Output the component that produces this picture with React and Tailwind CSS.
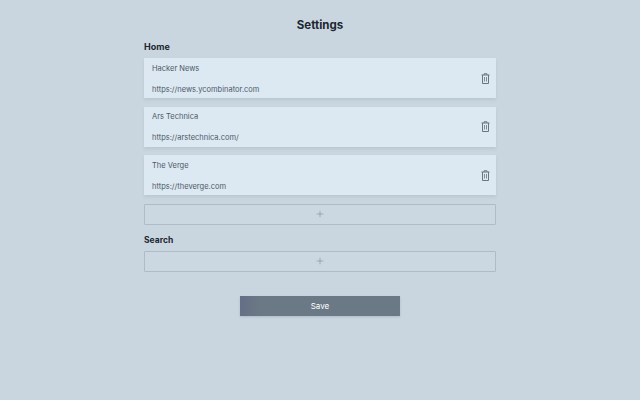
import { Plus } from "lucide-react";

const sites = [
  { name: "Hacker News", url: "https://news.ycombinator.com" },
  { name: "Ars Technica", url: "https://arstechnica.com/" },
  { name: "The Verge", url: "https://theverge.com" },
];

const TrashIcon = () => (
  <svg width="9" height="11" viewBox="0 0 9 11" fill="none" stroke="#687582" strokeWidth="1">
    <path d="M.5 2h8M3 2V.8h3V2" />
    <path d="M1.5 2v8.5h6V2" />
    <path d="M3.5 4v4.5M5.5 4v4.5" strokeWidth="0.8" />
  </svg>
);

const SiteCard = ({ name, url }) => (
  <div className="flex h-[40px] items-center justify-between bg-[#dce8f2] pl-2 pr-[6px] shadow-[0_2px_3px_#b9c7d2]">
    <div className="flex flex-col gap-[11px] pt-[2px] text-[7.5px] leading-[10px] text-[#4d5966]">
      <span>{name}</span>
      <span>{url}</span>
    </div>
    <TrashIcon />
  </div>
);

const AddButton = () => (
  <button
    type="button"
    className="flex h-[21px] w-full items-center justify-center rounded-[1px] border border-[#aebcc8] bg-[#cbd8e2] text-[#5f6c78]"
  >
    <Plus size={10} strokeWidth={1} />
  </button>
);

const App = () => {
  return (
    <div className="h-[400px] w-[640px] overflow-hidden bg-[#c9d6e0] font-['Inter',sans-serif]">
      <div className="mx-auto flex w-[352px] flex-col pt-[17px]">
        <h1 className="text-center text-[11.5px] leading-[16px] font-bold text-[#1d2630]">Settings</h1>
        <h2 className="mt-[8px] text-[9px] leading-[12px] font-bold text-[#1d2630]">Home</h2>
        <div className="mt-[5px] flex flex-col gap-[8.5px]">
          {sites.map((site) => (
            <SiteCard key={site.name} {...site} />
          ))}
        </div>
        <div className="mt-[8.5px]">
          <AddButton />
        </div>
        <h2 className="mt-[9px] text-[8.5px] leading-[12px] font-bold text-[#1d2630]">Search</h2>
        <div className="mt-[5px]">
          <AddButton />
        </div>
        <button
          type="button"
          className="mx-auto mt-[24px] h-[20px] w-[160px] bg-gradient-to-r from-[#666f86] to-[#6b7885] to-[12%] pt-[1px] text-[8px] text-white shadow-[0_1px_2px_#aebcc8]"
        >
          Save
        </button>
      </div>
    </div>
  );
};

export default App;
